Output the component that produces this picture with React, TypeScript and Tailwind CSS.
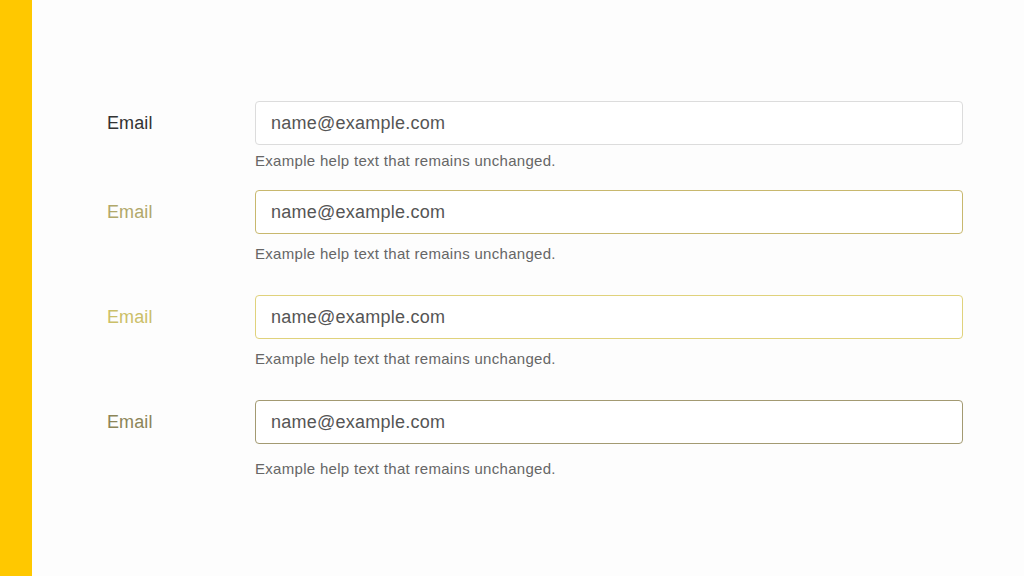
import React from "react"

type Row = {
  wrap: string
  label: string
  border: string
  help: string
}

// each row is a slightly different state of the same field
const rows: Row[] = [
  { wrap: "mt-[101px]", label: "text-[#333333]", border: "border-[#dcdcdc]", help: "mt-[7px]" },
  { wrap: "mt-[20px]", label: "text-[#b1a86a]", border: "border-[#c8b86e]", help: "mt-[11px]" },
  { wrap: "mt-[32px]", label: "text-[#cbbf68]", border: "border-[#e0d27c]", help: "mt-[11px]" },
  { wrap: "mt-[32px]", label: "text-[#8c8558]", border: "border-[#a39a72]", help: "mt-[16px] -ml-px" },
]

export default function App() {
  return (
    <div
      className="flex h-[576px] w-[1024px] bg-[#fdfdfd]"
      style={{ fontFamily: '"Liberation Sans", Arial, sans-serif' }}
    >
      <div className="w-[32px] shrink-0 bg-[#ffc800]" />
      <div className="flex flex-col pl-[75px]">
        {rows.map((r, i) => (
          <div key={i} className={r.wrap}>
            <div className="flex items-center">
              <label className={`w-[148px] text-[18px] tracking-[0.1px] ${r.label}`}>Email</label>
              <div
                className={`flex h-[44px] w-[708px] items-center rounded-[4px] border bg-white px-[15px] text-[18px] tracking-[0.25px] text-[#555555] ${r.border}`}
              >
                name@example.com
              </div>
            </div>
            <p className={`ml-[148px] text-[15px] leading-[18px] tracking-[0.3px] text-[#666666] ${r.help}`}>
              Example help text that remains unchanged.
            </p>
          </div>
        ))}
      </div>
    </div>
  )
}
